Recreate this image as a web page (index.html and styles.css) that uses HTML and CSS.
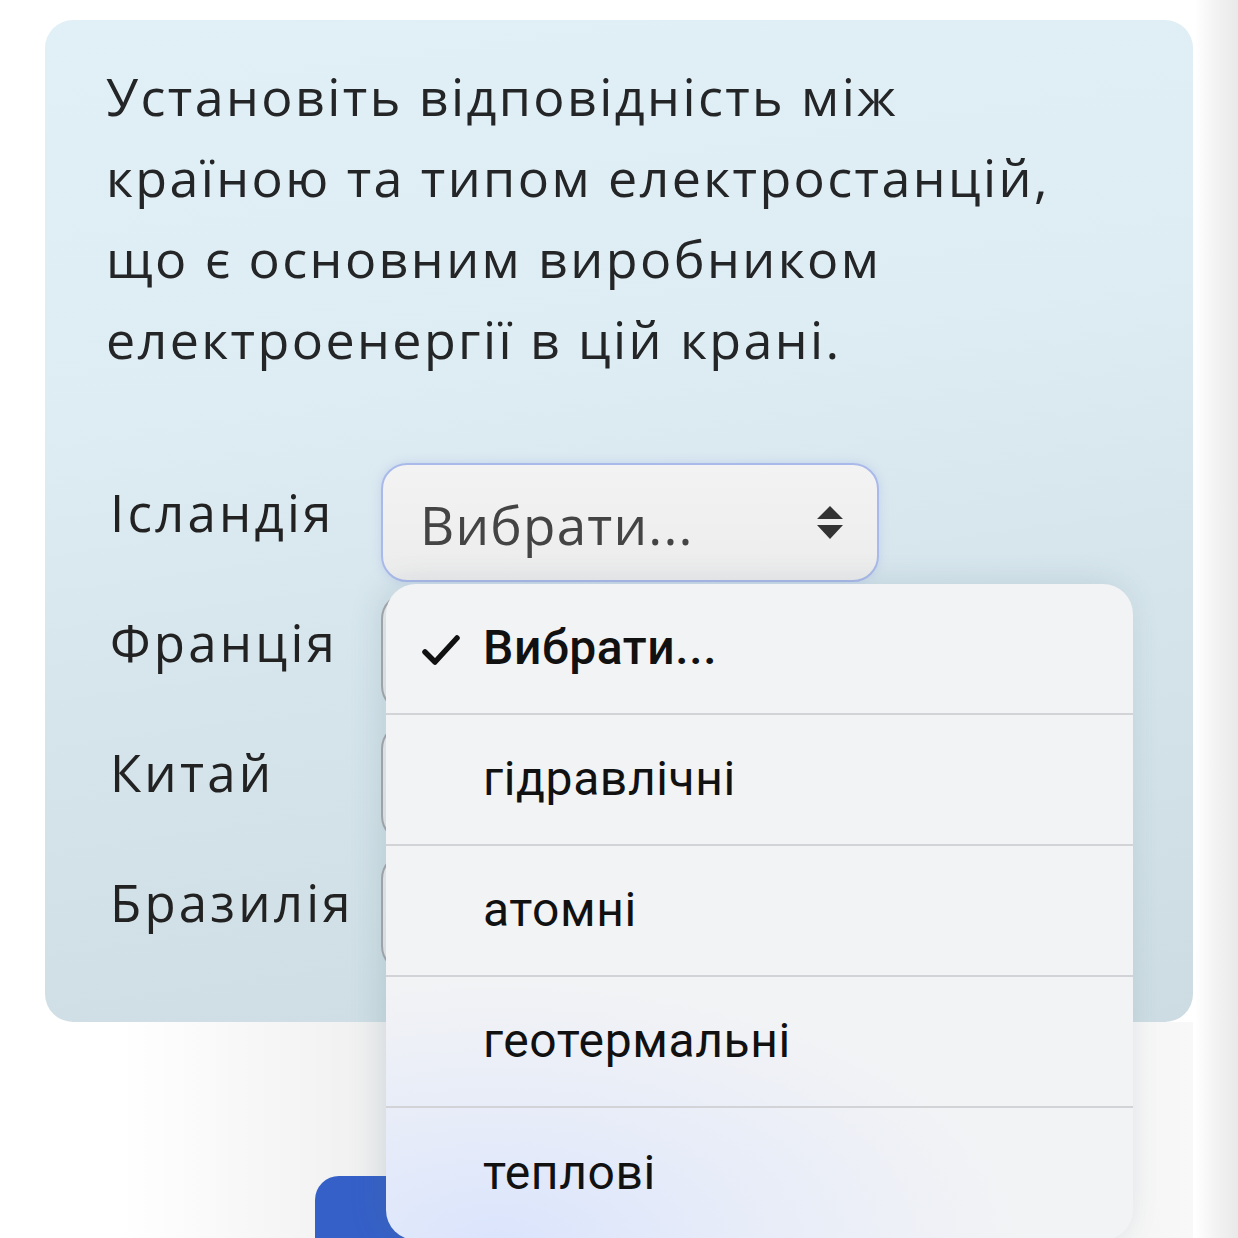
FILE: index.html
```html
<!DOCTYPE html>
<html lang="uk">
<head>
<meta charset="utf-8">
<title>Відповідність</title>
<link rel="stylesheet" href="styles.css">
</head>
<body>
<div class="page">
  <section class="card">
    <p class="question">Установіть відповідність між<br>країною та типом електростанцій,<br>що є основним виробником<br>електроенергії в цій крані.</p>
    <div class="rows">
      <div class="label">Ісландія</div>
      <div class="select focused">
        <span class="select-text">Вибрати...</span>
        <svg class="arrows" width="26" height="34" viewBox="0 0 26 34"><path d="M13 0 L26 13 L0 13 Z M0 19 L26 19 L13 33 Z" fill="#333"/></svg>
      </div>
      <div class="label">Франція</div>
      <div class="select"></div>
      <div class="label">Китай</div>
      <div class="select"></div>
      <div class="label">Бразилія</div>
      <div class="select"></div>
    </div>
  </section>
  <div class="below">
    <div class="button"></div>
  </div>
</div>
<ul class="menu">
  <li class="item selected">
    <svg class="check" width="38" height="32" viewBox="0 0 38 32"><path d="M3 17 L13 27 L35 3" fill="none" stroke="#111" stroke-width="5.5" stroke-linecap="round" stroke-linejoin="round"/></svg>
    <span>Вибрати...</span>
  </li>
  <li class="item"><span>гідравлічні</span></li>
  <li class="item"><span>атомні</span></li>
  <li class="item"><span>геотермальні</span></li>
  <li class="item last"><span>теплові</span></li>
</ul>
</body>
</html>
```
FILE: styles.css
```css
html, body {
  margin: 0;
  padding: 0;
}
body {
  width: 1238px;
  height: 1238px;
  overflow: hidden;
  position: relative;
  background: linear-gradient(to right, #ffffff 0, #ffffff 1195px, #f3f3f3 1215px, #e9e9e9 1238px);
  font-family: "Open Sans", "DejaVu Sans", sans-serif;
  color: #222;
}
.page {
  padding: 20px 45px 0 45px;
}
.card {
  height: 1002px;
  box-sizing: border-box;
  border-radius: 28px;
  padding: 35px 20px 0 61px;
  background: linear-gradient(172deg, #e1eff7 0%, #deecf3 35%, #d6e5ec 60%, #ccdce2 100%);
}
.question {
  margin: 0;
  font-size: 52px;
  line-height: 81px;
  letter-spacing: 2.4px;
  color: #232526;
  white-space: nowrap;
}
.rows {
  margin-top: 84px;
  display: grid;
  grid-template-columns: 275px 498px;
  grid-auto-rows: 119px;
  row-gap: 11px;
}
.label {
  font-size: 51px;
  letter-spacing: 3.2px;
  color: #222;
  padding-left: 4px;
  line-height: 98px;
  white-space: nowrap;
}
.select {
  box-sizing: border-box;
  border: 2px solid #a7a9ad;
  border-radius: 26px;
  background: linear-gradient(#f1f1f1, #e9e9e9);
  display: flex;
  align-items: center;
  justify-content: space-between;
  padding: 0 34px 0 37px;
}
.select.focused {
  border-color: #a9b9e9;
  box-shadow: 0 0 10px rgba(150,170,230,0.35);
  background: linear-gradient(#f3f3f3, #ececec);
}
.select-text {
  font-size: 53px;
  color: #444;
  letter-spacing: 1.2px;
  padding-top: 4px;
}
.below {
  margin: 0 0 0 -45px;
  height: 216px;
  padding-top: 154px;
  box-sizing: border-box;
  background: linear-gradient(to right, #ffffff 0%, #ffffff 10%, #f1f1f1 30%, #f0f0f0 85%, #f8f8f8 100%);
}
.button {
  margin-left: 315px;
  width: 600px;
  height: 120px;
  border-radius: 24px;
  background: #3560c8;
}
.menu {
  position: absolute;
  left: 386px;
  top: 584px;
  width: 747px;
  height: 656px;
  margin: 0;
  padding: 0;
  list-style: none;
  border-radius: 30px;
  overflow: hidden;
  background:
    radial-gradient(ellipse 520px 260px at 15% 100%, rgba(218,228,252,1) 0%, rgba(226,233,250,0.8) 40%, rgba(242,243,245,0) 100%),
    #f2f3f5;
  box-shadow: -6px 0 30px rgba(80,110,130,0.18);
  font-family: Roboto, "Noto Sans", sans-serif;
}
.item {
  height: 131px;
  box-sizing: border-box;
  border-bottom: 2px solid #d2d3d6;
  display: flex;
  align-items: center;
  padding-left: 97px;
  position: relative;
  font-size: 48px;
  letter-spacing: 0.6px;
  color: #111;
}
.item.last {
  border-bottom: none;
}
.item span {
  padding-bottom: 2px;
}
.item.selected span {
  font-weight: 500;
}
.check {
  position: absolute;
  left: 36px;
  top: 51px;
}
.arrows {
  display: block;
}
```
